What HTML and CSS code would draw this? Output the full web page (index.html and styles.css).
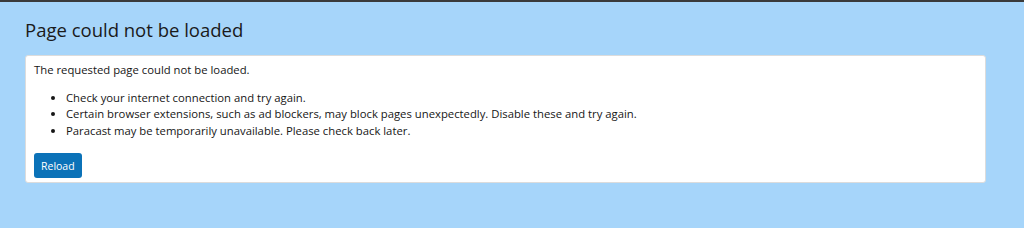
FILE: index.html
```html
<!DOCTYPE html>
<html lang="en">
<head>
  <meta charset="UTF-8">
  <title>Page could not be loaded</title>
  <link rel="stylesheet" href="styles.css">
</head>
<body>

  <div class="page">
    <h1 class="title">Page could not be loaded</h1>

    <div class="error-box">
      <p>The requested page could not be loaded.</p>
      <ul class="reasons">
        <li>Check your internet connection and try again.</li>
        <li>Certain browser extensions, such as ad blockers, may block pages unexpectedly. Disable these and try again.</li>
        <li>Paracast may be temporarily unavailable. Please check back later.</li>
      </ul>
      <button class="reload-btn" onclick="location.reload()">Reload</button>
    </div>
  </div>

</body>
</html>
```

FILE: styles.css
```css
* {
  box-sizing: border-box;
  margin: 0;
  padding: 0;
}

body {
  font-family: "Open Sans", "Noto Sans", sans-serif;
  background-color: #a6d5fa;
  border-top: 2px solid #3a3a3a;
  min-height: 100vh;
  color: #161616;
}

/* Page */
.page {
  padding: 16px 38px 0 25px;
}

.title {
  font-size: 18.5px;
  font-weight: normal;
  line-height: 24px;
  color: #1a1a1a;
  margin-bottom: 13px;
}

/* Card */
.error-box {
  background-color: #fff;
  border: 1px solid #dcdcdc;
  border-radius: 3px;
  padding: 6px 8px 4px 8px;
  font-size: 11.3px;
  line-height: 16.5px;
}

.reasons {
  margin: 11px 0 14px 0;
  padding-left: 32px;
}

.reload-btn {
  font-family: inherit;
  font-size: 10.5px;
  color: #fff;
  background-color: #0b72b8;
  border: none;
  border-radius: 3px;
  padding: 0 7px;
  height: 25px;
}
```
